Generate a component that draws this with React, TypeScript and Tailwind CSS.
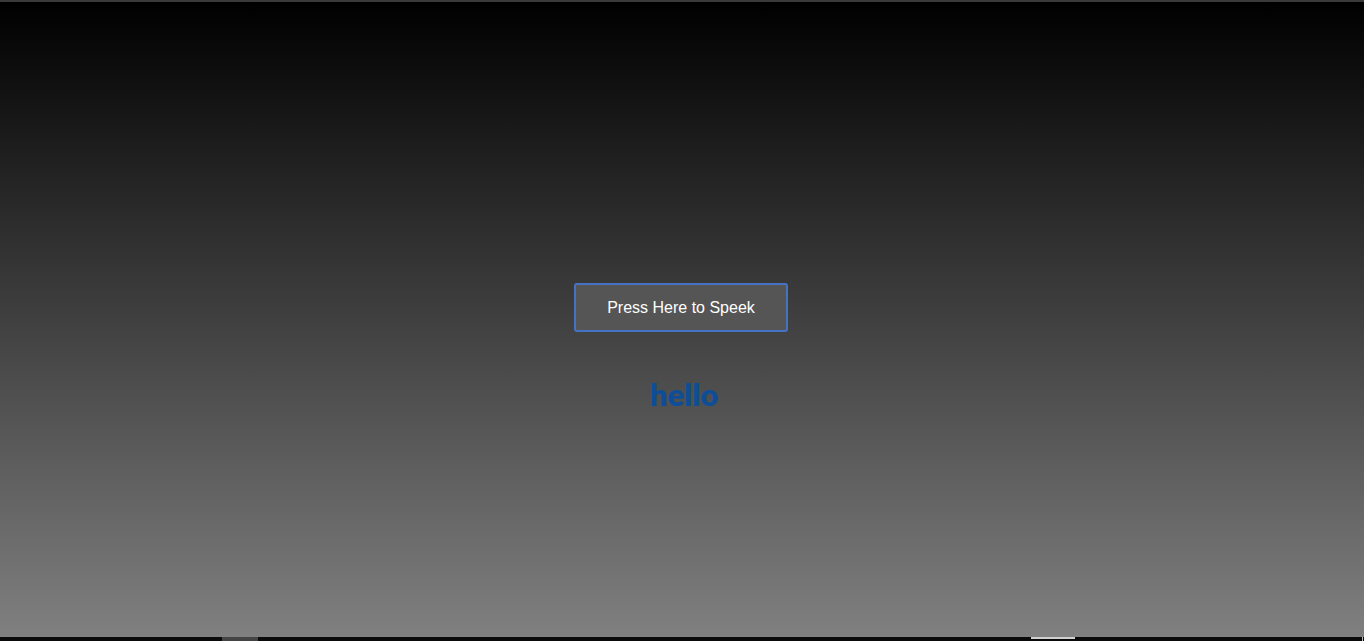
export default function App() {
  return (
    <div className="flex h-[641px] w-full flex-col bg-black">
      <div className="h-[2px] bg-[#3a3a3a]" />
      <main className="flex h-[635px] flex-col items-center bg-[linear-gradient(to_bottom,#000000,#808080)] pt-[281px]">
        <button className="mr-[2px] h-[49px] w-[214px] rounded-[3px] border-2 border-[#4672c4] bg-[#555555] font-['Liberation_Sans',Arial,sans-serif] text-[16px] text-white">
          Press Here to Speek
        </button>
        <p className="mt-[44px] ml-[4px] font-['Comic_Sans_MS',Lato,sans-serif] text-[31px] leading-[36px] font-extrabold text-[#0e4d98]">
          hello
        </p>
      </main>
      <div className="flex h-[4px] bg-[#0b0b0b]">
        <div className="w-[222px]" />
        <div className="w-[36px] bg-[#444444]" />
        <div className="w-[773px]" />
        <div className="h-[2px] w-[44px] bg-[#d0d0d0]" />
        <div className="w-[287px]" />
        <div className="w-[1px] bg-[#bbbbbb]" />
      </div>
    </div>
  );
}
